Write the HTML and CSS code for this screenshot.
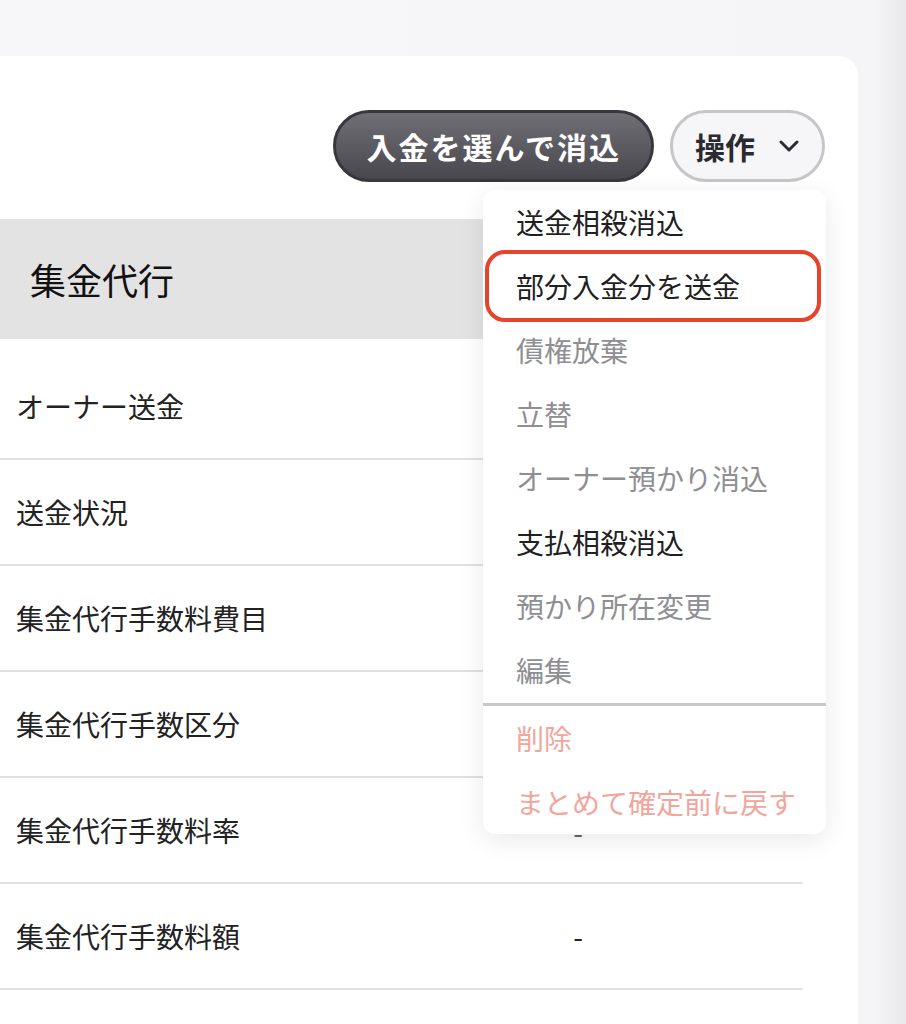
FILE: index.html
```html
<!DOCTYPE html>
<html lang="ja">
  <head>
    <meta charset="utf-8" />
    <meta name="viewport" content="width=device-width, initial-scale=1" />
    <title>集金代行</title>

    <link rel="stylesheet" href="styles.css">
  </head>
  <body>
    <div class="card">
      <div class="toolbar">
        <button class="btn btn-primary" type="button">入金を選んで消込</button>
        <div class="menu-wrap">
          <button class="btn btn-menu" type="button">
            操作
            <svg class="chevron" width="20" height="12" viewBox="0 0 20 12" aria-hidden="true">
              <path d="M2 2 L10 10 L18 2" fill="none" stroke="#2a2a30" stroke-width="3" stroke-linecap="round" stroke-linejoin="round" />
            </svg>
          </button>
          <ul class="menu">
            <li class="menu-item">送金相殺消込</li>
            <li class="menu-item is-marked">部分入金分を送金</li>
            <li class="menu-item is-disabled">債権放棄</li>
            <li class="menu-item is-disabled">立替</li>
            <li class="menu-item is-disabled">オーナー預かり消込</li>
            <li class="menu-item">支払相殺消込</li>
            <li class="menu-item is-disabled">預かり所在変更</li>
            <li class="menu-item is-disabled">編集</li>
            <li class="menu-divider"></li>
            <li class="menu-item is-danger">削除</li>
            <li class="menu-item is-danger">まとめて確定前に戻す</li>
          </ul>
        </div>
      </div>

      <div class="section">
        <div class="section-head">集金代行</div>
        <div class="rows">
          <div class="row"><span class="label">オーナー送金</span><span class="value"></span></div>
          <div class="row"><span class="label">送金状況</span><span class="value"></span></div>
          <div class="row"><span class="label">集金代行手数料費目</span><span class="value"></span></div>
          <div class="row"><span class="label">集金代行手数区分</span><span class="value"></span></div>
          <div class="row"><span class="label">集金代行手数料率</span><span class="value is-low">-</span></div>
          <div class="row"><span class="label">集金代行手数料額</span><span class="value">-</span></div>
        </div>
      </div>
    </div>
  </body>
</html>
```

FILE: styles.css
```css
* {
  box-sizing: border-box;
  margin: 0;
  padding: 0;
}

body {
  font-family: "Noto Sans CJK JP", "Noto Sans", sans-serif;
  background: linear-gradient(to right, #f7f7f9 0, #f5f5f7 872px, #e9e9ec 906px);
  color: #222;
  overflow: hidden;
  padding-top: 56px;
}

.card {
  margin: 0 48px 0 -24px;
  padding: 54px 33px 60px 24px;
  min-height: 1000px;
  background-color: #fff;
  border-radius: 20px;
}

/* buttons row */
.toolbar {
  display: flex;
  justify-content: flex-end;
  gap: 16px;
}

.btn {
  display: inline-flex;
  align-items: center;
  height: 72px;
  border-radius: 36px;
  font-family: inherit;
  font-size: 30px;
  font-weight: bold;
  cursor: pointer;
}

.btn-primary {
  padding: 0 30px 0 31px;
  letter-spacing: 2px;
  color: #fff;
  background: linear-gradient(#716f76, #48474d);
  border: 3px solid #38373d;
}

.btn-menu {
  padding: 0 23px 0 22px;
  gap: 24px;
  color: #2a2a30;
  background-color: #f6f6f8;
  border: 3px solid #c6c6c8;
}

.menu-wrap {
  position: relative;
}

.menu {
  position: absolute;
  top: calc(100% + 8px);
  right: -1px;
  width: 343px;
  list-style: none;
  background-color: #fff;
  border-radius: 12px;
  box-shadow: 0 6px 26px rgba(0, 0, 0, 0.09);
  z-index: 2;
}

.menu-item {
  position: relative;
  height: 64px;
  line-height: 64px;
  padding-left: 33px;
  font-size: 28px;
  color: #1f1f24;
  white-space: nowrap;
}

.menu-item.is-disabled {
  color: #8e8e93;
}

.menu-item.is-danger {
  color: #f2a59b;
}

.menu-item.is-marked::after {
  content: "";
  position: absolute;
  top: -4px;
  left: 2px;
  right: 5px;
  height: 64px;
  border: 4px solid #e5432b;
  border-radius: 20px;
}

.menu-divider {
  height: 3px;
  margin-top: 1px;
  background-color: #c8c8c8;
}

/* table */
.section {
  margin-top: 37px;
  margin-right: 22px;
}

.section-head {
  display: flex;
  align-items: center;
  height: 120px;
  padding-left: 30px;
  font-size: 36px;
  color: #111;
  background-color: #e3e3e3;
}

.rows {
  margin-top: 15px;
}

.row {
  display: grid;
  grid-template-columns: 353px 1fr;
  align-items: center;
  height: 106px;
  border-bottom: 2px solid #e0e0e0;
  font-size: 28px;
}

.label {
  padding-left: 16px;
  color: #222;
}

.value {
  text-align: center;
  color: #222;
}

.value.is-low {
  padding-top: 3px;
  color: #666;
}
```
